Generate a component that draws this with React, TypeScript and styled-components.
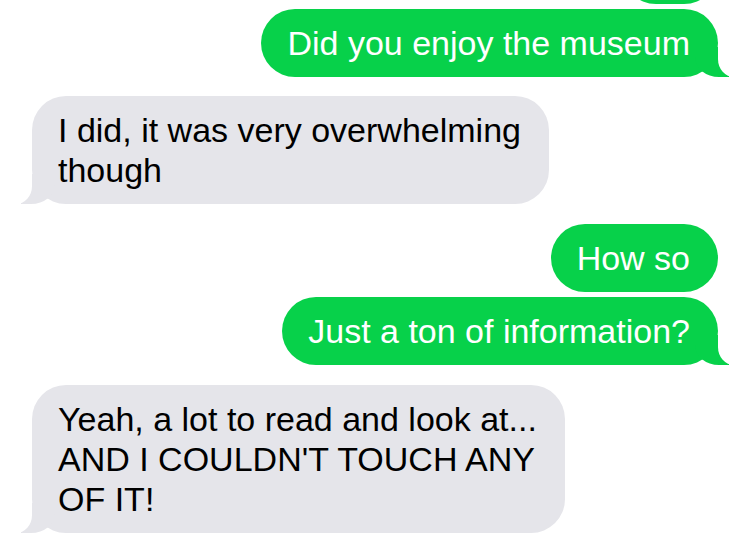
import React from 'react'
import styled, { createGlobalStyle, css } from 'styled-components'

type Side = 'me' | 'them'

const GREEN = '#07d14a'
const GRAY = '#e5e5ea'

interface Group {
    side: Side
    lines: string[]
    // a bubble scrolled up past the top edge
    stub?: boolean
}

const thread: Group[] = [
    { side: 'me', stub: true, lines: ['Did you enjoy the museum'] },
    { side: 'them', lines: ['I did, it was very overwhelming\nthough'] },
    { side: 'me', lines: ['How so', 'Just a ton of information?'] },
    {
        side: 'them',
        lines: ["Yeah, a lot to read and look at...\nAND I COULDN'T TOUCH ANY\nOF IT!"],
    },
]

const App = () => {
    return (
        <>
            <GlobalStyle />
            <Thread>
                {thread.map((group, gi) => (
                    <GroupBox key={gi} $side={group.side}>
                        {group.stub && <Stub $side={group.side} />}
                        {group.lines.map((text, i) => (
                            <Bubble
                                key={i}
                                $side={group.side}
                                $tail={i === group.lines.length - 1}
                            >
                                {text}
                            </Bubble>
                        ))}
                    </GroupBox>
                ))}
            </Thread>
        </>
    )
}

export default App

const GlobalStyle = createGlobalStyle`
    html, body {
        margin: 0;
        padding: 0;
        background: #fff;
    }
    body {
        font-family: 'Liberation Sans', Arial, sans-serif;
    }
`

const Thread = styled.div`
    width: 750px;
    height: 559px;
    box-sizing: border-box;
    padding: 0 32px;
    overflow: hidden;
    display: flex;
    flex-direction: column;
    gap: 20px;
`

const GroupBox = styled.div<{ $side: Side }>`
    display: flex;
    flex-direction: column;
    gap: 5px;
    align-items: ${(p) => (p.$side === 'me' ? 'flex-end' : 'flex-start')};

    &:first-child {
        margin-top: -64px;
        margin-bottom: -1px;
    }
`

// the little hook under the last bubble of a run
const tailMe = css`
    &::before {
        content: '';
        position: absolute;
        bottom: 0;
        right: -11px;
        width: 34px;
        height: 30px;
        background: ${GREEN};
        border-bottom-left-radius: 24px 20px;
    }
    &::after {
        content: '';
        position: absolute;
        bottom: 0;
        right: -44px;
        width: 44px;
        height: 30px;
        background: #fff;
        border-bottom-left-radius: 16px 18px;
    }
`

const tailThem = css`
    &::before {
        content: '';
        position: absolute;
        bottom: 0;
        left: -11px;
        width: 34px;
        height: 30px;
        background: ${GRAY};
        border-bottom-right-radius: 24px 20px;
    }
    &::after {
        content: '';
        position: absolute;
        bottom: 0;
        left: -44px;
        width: 44px;
        height: 30px;
        background: #fff;
        border-bottom-right-radius: 16px 18px;
    }
`

const Bubble = styled.div<{ $side: Side; $tail?: boolean }>`
    position: relative;
    padding: 14px 28px 14px 26px;
    border-radius: 34px;
    font-size: 34px;
    line-height: 40px;
    white-space: pre-line;
    background: ${(p) => (p.$side === 'me' ? GREEN : GRAY)};
    color: ${(p) => (p.$side === 'me' ? '#fff' : '#000')};
    ${(p) => p.$tail && (p.$side === 'me' ? tailMe : tailThem)}
`

const Stub = styled(Bubble)`
    width: 96px;
    height: 68px;
    box-sizing: border-box;
    padding: 0;
`
